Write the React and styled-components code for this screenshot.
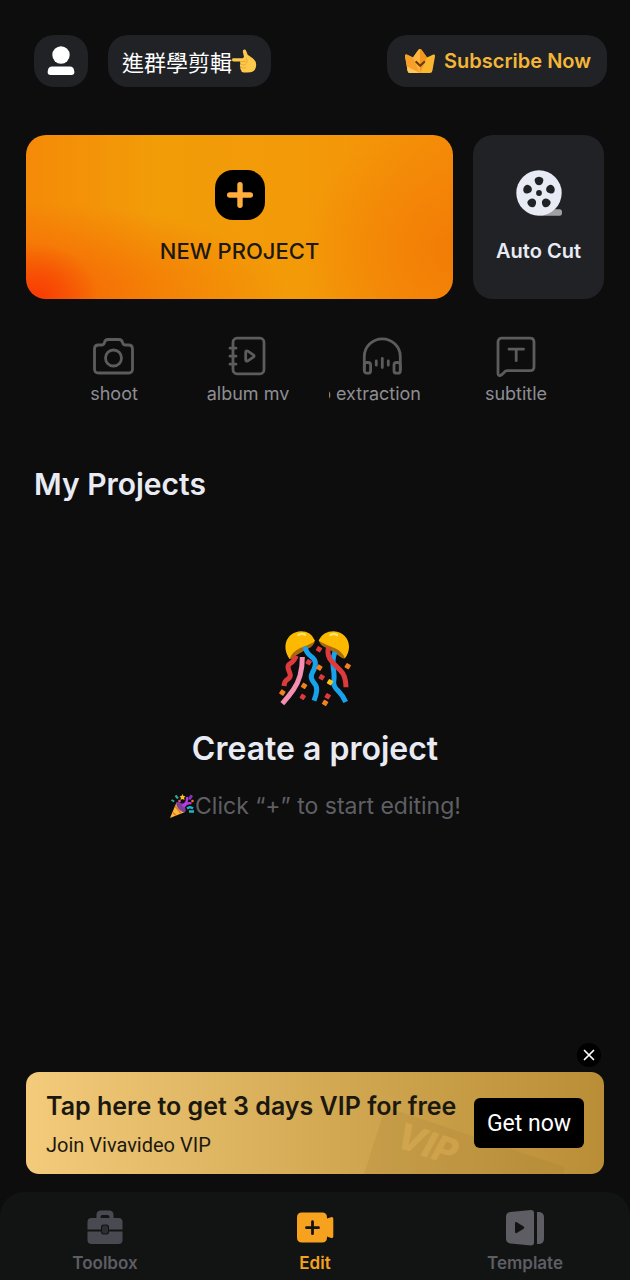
import React, { useState } from "react";
import styled, { createGlobalStyle } from "styled-components";

const shortcuts = [
  { id: "shoot", label: "shoot", icon: <CameraIcon /> },
  { id: "album", label: "album mv", icon: <AlbumIcon /> },
  { id: "audio", label: "audio extraction", icon: <HeadphonesIcon />, scrolled: true },
  { id: "subtitle", label: "subtitle", icon: <SubtitleIcon /> },
];

const tabs = [
  { id: "toolbox", label: "Toolbox", icon: <ToolboxIcon /> },
  { id: "edit", label: "Edit", icon: <EditIcon /> },
  { id: "template", label: "Template", icon: <TemplateIcon /> },
];

export default function App() {
  const [activeTab, setActiveTab] = useState("edit");
  const [showBanner, setShowBanner] = useState(true);

  return (
    <Page>
      <GlobalStyle />
      <Header>
        <ProfileButton aria-label="Profile">
          <ProfileIcon />
        </ProfileButton>
        <GroupButton>
          進群學剪輯
          <HandIcon />
        </GroupButton>
        <SubscribeButton>
          <CrownIcon />
          Subscribe Now
        </SubscribeButton>
      </Header>

      <Content>
        <Actions>
          <NewProjectCard>
            <PlusIcon />
            <NewProjectLabel>NEW PROJECT</NewProjectLabel>
          </NewProjectCard>
          <AutoCutCard>
            <ReelIcon />
            <AutoCutLabel>Auto Cut</AutoCutLabel>
          </AutoCutCard>
        </Actions>

        <Shortcuts>
          {shortcuts.map((item) => (
            <Shortcut key={item.id}>
              {item.icon}
              <ShortcutLabel $scrolled={item.scrolled}>
                <span>{item.label}</span>
              </ShortcutLabel>
            </Shortcut>
          ))}
        </Shortcuts>

        <SectionTitle>My Projects</SectionTitle>

        <EmptyState>
          <ConfettiIcon />
          <EmptyTitle>Create a project</EmptyTitle>
          <EmptyHint>
            <PartyIcon />
            Click “+” to start editing!
          </EmptyHint>
        </EmptyState>

        {showBanner && (
          <Promo>
            <CloseButton aria-label="Close" onClick={() => setShowBanner(false)}>
              <CloseIcon />
            </CloseButton>
            <Banner>
              <Watermark />
              <BannerText>
                <BannerTitle>Tap here to get 3 days VIP for free</BannerTitle>
                <BannerSubtitle>Join Vivavideo VIP</BannerSubtitle>
              </BannerText>
              <GetButton>Get now</GetButton>
            </Banner>
          </Promo>
        )}
      </Content>

      <TabBar>
        {tabs.map((tab) => (
          <Tab
            key={tab.id}
            $active={tab.id === activeTab}
            onClick={() => setActiveTab(tab.id)}
          >
            {tab.icon}
            {tab.label}
          </Tab>
        ))}
      </TabBar>
    </Page>
  );
}

/* ---------- icons ---------- */

function ProfileIcon() {
  return (
    <svg width="28" height="30" viewBox="0 0 28 30" fill="#fff">
      <circle cx="14" cy="9" r="8.7" />
      <path d="M5 20.500h18q3.500 0 4 3.500l.4 2q0 3-3 3H3.600q-3 0-3-3l.4-2q.5-3.500 4-3.500z" />
    </svg>
  );
}

function HandIcon() {
  return (
    <svg width="25" height="24" viewBox="0 0 25 24">
      <path
        d="M1.500 9.300h9.200L12 8 10.800 2.500q0-2.300 2-2 1 .2 1.500 1.700l1.400 3.500 5 3.500q3.500 2.500 3.500 6.800 0 4.500-3.300 6.500-2 1-6.500.9h-3q-2.400 0-2.300-2.300-1.300-1.200-.6-3-1.200-1.400-.1-3.200-.5-1 0-2.300l-6.900-.2Q0 12.200 0 10.700q0-1.400 1.500-1.400z"
        fill="#fcc94b"
      />
      <path
        d="M8.500 12.500h4.700M8.500 15.200q.6 1 5 .7M9.200 18.400q1 .8 4.300.5M14.500 9.500q2 3-.5 5"
        stroke="#eda93a"
        strokeWidth="1"
        fill="none"
        strokeLinecap="round"
      />
    </svg>
  );
}

function CrownIcon() {
  return (
    <svg width="30" height="24" viewBox="0 0 30 24">
      <path d="M1.700 5.500 8 8.500l5.500-7.700q1.500-1.600 3 0L22 8.500l6.300-3q1.900-.4 1.700 1.800l-2.600 14.500q-.4 2.200-2.600 2.200H5.200q-2.200 0-2.600-2.200L0 7.300Q-.2 5.100 1.700 5.500z" fill="#fbb62f" />
      <path d="M1.700 5.500 8 8.500 15 19v5H5.200q-2.200 0-2.600-2.200L0 7.300Q-.2 5.100 1.700 5.500z" fill="#f7a02a" />
      <path d="M2 17.500 15 24H5.200q-2.200 0-2.600-2.200z" fill="#ffc65c" />
      <path d="m8 8.500 5.500-7.700Q14 .2 15 .2V24z" fill="#ffb540" />
      <path d="M15 .2q1 0 1.500.6L22 8.500 15 24z" fill="#f2951b" />
      <path d="m11.300 13 3.900 3.800 4-3.800" stroke="#6b3c08" strokeWidth="2.200" fill="none" strokeLinecap="round" strokeLinejoin="round" />
    </svg>
  );
}

function PlusIcon() {
  return (
    <svg width="50" height="50" viewBox="0 0 50 50">
      <rect width="50" height="50" rx="18" fill="#000" />
      <path d="M25 14.700v20.600M14.700 25h20.600" stroke="#ffad3d" strokeWidth="5.400" strokeLinecap="round" />
    </svg>
  );
}

function ReelIcon() {
  return (
    <svg width="46" height="46" viewBox="0 0 46 46">
      <path d="M24 45.700h19.500q2.500 0 2.500-2.700v-1q0-2.700-2.500-2.700H34z" fill="#9fa0a3" />
      <circle cx="23" cy="23" r="22.700" fill="#e9ebf4" />
      <circle cx="23" cy="23" r="2.900" fill="#202226" />
      {[0, 72, 144, 216, 288].map((angle) => (
        <path
          key={angle}
          d="M23 6.700q2.300 0 3.700 1.500 1.300 1.600.3 3.900-1.200 3.200-4 3.200t-4-3.200q-1-2.300.3-3.900Q20.700 6.700 23 6.700z"
          fill="#202226"
          transform={`rotate(${angle} 23 23)`}
        />
      ))}
    </svg>
  );
}

function CameraIcon() {
  return (
    <ShortcutSvg viewBox="0 0 42 42">
      <path d="M5.500 9h3q2.500 0 3-2.500.7-3 3.500-3h11q2.800 0 3.500 3Q30 9 32.500 9h3q4 0 4 4v20q0 4-4 4h-30q-4 0-4-4V13q0-4 4-4z" />
      <circle cx="20.500" cy="22" r="8" />
    </ShortcutSvg>
  );
}

function AlbumIcon() {
  return (
    <ShortcutSvg viewBox="0 0 42 42">
      <rect x="6" y="2.200" width="31" height="35.600" rx="4" />
      <path d="M3 12.200h6M3 20.200h6M3 28.200h6" />
      <path d="M18.700 16.500q0-2.500 2.200-1.300l5.400 3.600q1.700 1.200 0 2.400l-5.400 3.600q-2.200 1.200-2.200-1.300z" />
    </ShortcutSvg>
  );
}

function HeadphonesIcon() {
  return (
    <ShortcutSvg viewBox="0 0 42 42">
      <path d="M3.300 34V20.500a18 17.700 0 0 1 36 0V34" />
      <rect x="3.300" y="26.500" width="6.300" height="10.700" rx="2.500" />
      <rect x="33" y="26.500" width="6.300" height="10.700" rx="2.500" />
      <path d="M15.300 25v4.200M21.300 22.500v9M27.300 25v4.200" />
    </ShortcutSvg>
  );
}

function SubtitleIcon() {
  return (
    <ShortcutSvg viewBox="0 0 42 42">
      <path d="M7 2.200h28q4 0 4 4v24.500q0 4-4 4H12.500q-2 0-3.500 1.800l-2 2q-3.500 2.500-4-.8V6.200q0-4 4-4z" />
      <path d="M14 13.200h14.500M21.200 13.200v11.500" />
    </ShortcutSvg>
  );
}

/* Two streamer balls with falling confetti */
function ConfettiIcon() {
  const dots = [
    [174, 102, "#dc3a3c"],
    [143, 141, "#dc3a3c"],
    [175, 157, "#f4801c"],
    [182, 186, "#dc3a3c"],
    [207, 201, "#fcc21b"],
    [129, 212, "#f4801c"],
    [125, 245, "#dc3a3c"],
    [200, 243, "#dc3a3c"],
    [192, 263, "#f4801c"],
    [64, 232, "#f4801c"],
    [260, 153, "#f4801c"],
  ];
  return (
    <svg width="76" height="78" viewBox="48 42 228 234">
      <path d="M86 132C60 96 76 51 120 49q30 0 42 28-8 14-26 22-18 8-28 18-14 14-22 15z" fill="#fcb900" />
      <path d="M86 132q8-22 30-32 24-9 45-20-4 14-22 22l-32 18q-12 12-21 12z" fill="#a8690f" />
      <path d="M252 130c26-36 8-78-34-81q-32 0-45 27 6 13 24 20 20 8 31 20 14 14 24 14z" fill="#fcb900" />
      <path d="M252 130q-8-20-30-30-22-8-48-22 4 14 24 22l30 18q14 12 24 12z" fill="#a8690f" />
      <path d="M112 60q10-6 20-1M208 60q11-6 20 0" stroke="#ffe36a" strokeWidth="7" fill="none" strokeLinecap="round" />
      <g fill="none" strokeWidth="15">
        <path d="M106 122q-8 18-18 23-11 6-5 20 4 9 5 16-1 9-10 13-8 5-9 19" stroke="#dc3a3c" />
        <path d="M124 126q0 61-27 98-14 20-33 42" stroke="#f48fb1" />
        <path d="M132 95q3 18 18 29 15 10 13 25-2 13-9 24-8 15 4 29 11 12 9 25-1 13-8 30" stroke="#17a3ec" />
        <path d="M222 111q-9 23-5 49 4 25 1 41-1 14 14 27 14 14 22 33" stroke="#17a3ec" />
        <path d="M202 98q-5 25 11 42 12 14 25 26 17 16 17 51" stroke="#dc3a3c" />
      </g>
      {dots.map(([x, y, color]) => (
        <rect key={`${x}-${y}`} x={x - 7} y={y - 7} width="15" height="15" rx="2" fill={color} transform={`rotate(32 ${x} ${y})`} />
      ))}
    </svg>
  );
}

function PartyIcon() {
  return (
    <svg width="26" height="26" viewBox="0 0 26 26">
      <path d="M1 25 7.500 9.500q6 3 8.500 9.500z" fill="#fcb93f" />
      <path d="m3.500 19 3.500 3.500M6 13l6 7.500" stroke="#e57825" strokeWidth="1.400" />
      <ellipse cx="12" cy="14" rx="3" ry="6.300" transform="rotate(-42 12 14)" fill="#7a3f9c" />
      <path d="M13 12q6-1 5-8M14.500 14q4-5 8-3.500" stroke="#b43be0" strokeWidth="2.400" fill="none" />
      <path d="m19 6 2.500-4.500L24 3l-2.500 4z" fill="#8b2fc9" />
      <path d="M6.500 2.500 9 5.500M2.500 7l2.700 1.500" stroke="#24b59d" strokeWidth="2" />
      <path d="m13.500 1 1 2 2 .3-1.400 1.500.4 2.200-2-1-2 1 .4-2.200L10.500 3.300l2-.3z" fill="#fcc21b" />
      <path d="M18 15.500q3-2.500 6 0M20 18.500h5" stroke="#1cb7c4" strokeWidth="2.300" fill="none" />
      <circle cx="10.500" cy="8" r="1.300" fill="#ec4899" />
      <circle cx="23.500" cy="8" r="1.300" fill="#f97316" />
    </svg>
  );
}

function CloseIcon() {
  return (
    <svg width="12" height="12" viewBox="0 0 12 12">
      <path d="m1.500 1.500 9 9M10.500 1.500l-9 9" stroke="#fff" strokeWidth="1.700" strokeLinecap="round" />
    </svg>
  );
}

function Watermark() {
  return (
    <WatermarkSvg viewBox="0 0 200 72" aria-hidden="true">
      <path d="M0 72 20 10q2-5 8-3l172 58v7z" fill="#8f6c2b" opacity="0.130" />
      <text
        x="30"
        y="44"
        transform="rotate(19 30 44)"
        fill="#e8b95c"
        opacity="0.350"
        fontFamily="Inter, sans-serif"
        fontSize="36"
        fontWeight="800"
        fontStyle="italic"
      >
        VIP
      </text>
    </WatermarkSvg>
  );
}

function ToolboxIcon() {
  return (
    <svg width="38" height="38" viewBox="0 0 38 38" fill="#494a51">
      <path fillRule="evenodd" d="M10.500 9.500V6q0-4.500 4.500-4.500h8q4.500 0 4.500 4.500v3.500zM14.500 9.500h9V8q0-2-2-2h-5q-2 0-2 2z" />
      <path d="M5.500 9h27q4 0 4 4v7.500h-14h-7h-14V13q0-4 4-4z" />
      <path d="M1.500 22.500h14h7h14V31q0 4-4 4h-27q-4 0-4-4z" />
      <rect x="15" y="15.500" width="8" height="10" rx="2.500" fill="#121414" />
      <rect x="16" y="16.500" width="6" height="8" rx="2" fill="#2c2e31" />
    </svg>
  );
}

function EditIcon() {
  return (
    <svg width="38" height="38" viewBox="0 0 38 38">
      <path
        d="M6 3.500h20q5 0 5 5v1l4-1.300q2.300-.5 2.300 1.500v17.700q0 2-2.300 1.500L31 27.500v1q0 5-5 5H6q-5 0-5-5v-20q0-5 5-5z"
        fill="currentColor"
      />
      <path d="M16.500 12.700v12M10.500 18.700h12" stroke="#121414" strokeWidth="2.800" strokeLinecap="round" />
    </svg>
  );
}

function TemplateIcon() {
  return (
    <svg width="38" height="38" viewBox="0 0 38 38" fill="currentColor">
      <path fillRule="evenodd" d="M4.500 3 25 1q3 0 3 3v29.500q0 3-3 3L4.500 34.500Q0 34 0 29.500V8q0-4.500 4.500-5zM9 14.500v8.300q0 2 1.800 1.200l6.800-4.200q1.300-1.100 0-2.200l-6.800-4.300q-1.800-.8-1.800 1.200z" />
      <path d="M31 3h1.500Q38 3 38 8.500v21q0 5.500-5.500 5.500H31z" />
    </svg>
  );
}

/* ---------- styles ---------- */

const GlobalStyle = createGlobalStyle`
  * {
    box-sizing: border-box;
  }
  body {
    margin: 0;
    background: #0d0d0d;
  }
  button {
    border: none;
    padding: 0;
    margin: 0;
    background: none;
    color: inherit;
    font: inherit;
    cursor: pointer;
  }
  svg {
    display: block;
    flex-shrink: 0;
  }
`;

const Page = styled.div`
  min-height: 100vh;
  display: flex;
  flex-direction: column;
  background: #0d0d0d;
  color: #e9ebf4;
  font-family: Inter, "Noto Sans CJK TC", sans-serif;
`;

const Header = styled.header`
  display: flex;
  align-items: center;
  gap: 20px;
  padding: 35px 23px 0 34px;
`;

const HeaderButton = styled.button`
  height: 52px;
  display: flex;
  align-items: center;
  justify-content: center;
  background: #202226;
  border-radius: 20px;
  white-space: nowrap;
`;

const ProfileButton = styled(HeaderButton)`
  width: 54px;
`;

const GroupButton = styled(HeaderButton)`
  padding: 0 14px;
  color: #fff;
  font-size: 22px;
`;

const SubscribeButton = styled(HeaderButton)`
  margin-left: auto;
  gap: 9px;
  padding: 0 16px 0 18px;
  color: #f5b638;
  font-size: 20px;
  font-weight: 600;
`;

const Content = styled.main`
  flex: 1;
  display: flex;
  flex-direction: column;
  padding: 48px 26px 18px;
`;

const Actions = styled.div`
  display: grid;
  grid-template-columns: 1fr 131px;
  gap: 20px;
`;

const ActionCard = styled.button`
  height: 164px;
  display: flex;
  flex-direction: column;
  align-items: center;
  padding-top: 35px;
  border-radius: 20px;
`;

const NewProjectCard = styled(ActionCard)`
  gap: 17px;
  color: #1b1810;
  background:
    radial-gradient(ellipse 64px 56px at 2% 100%, #f83a04, rgba(248, 70, 4, 0)),
    radial-gradient(ellipse 260px 90px at 0% 96%, rgba(246, 96, 4, 0.900), rgba(244, 112, 4, 0)),
    radial-gradient(ellipse 150px 130px at 100% 70%, rgba(242, 122, 6, 0.900), rgba(242, 126, 6, 0)),
    linear-gradient(90deg, #f58a08, #f29c08 30%, #f39a08 65%, #f58d08);
`;

const AutoCutCard = styled(ActionCard)`
  gap: 21px;
  background: #202226;
`;

const NewProjectLabel = styled.span`
  font-size: 22px;
  line-height: 28px;
  font-weight: 500;
`;

const AutoCutLabel = styled.span`
  font-size: 20px;
  line-height: 28px;
  font-weight: 600;
`;

const Shortcuts = styled.div`
  display: grid;
  grid-template-columns: repeat(4, 1fr);
  padding: 37px 21px 0;
`;

const Shortcut = styled.button`
  display: flex;
  flex-direction: column;
  align-items: center;
  gap: 4px;
`;

const ShortcutSvg = styled.svg`
  width: 42px;
  height: 42px;
  fill: none;
  stroke: #5c5c5e;
  stroke-width: 2.800;
  stroke-linecap: round;
  stroke-linejoin: round;
`;

/* A long label rests at the end of its marquee, with its start out of view */
const ShortcutLabel = styled.span`
  width: 106px;
  display: flex;
  justify-content: ${(props) => (props.$scrolled ? "flex-end" : "center")};
  padding-right: ${(props) => (props.$scrolled ? "14px" : "0")};
  overflow: hidden;
  white-space: nowrap;
  color: #8e8e93;
  font-size: 18px;
  line-height: 24px;
`;

const SectionTitle = styled.h2`
  margin: 0;
  padding: 58px 8px 0;
  font-size: 30px;
  line-height: 40px;
  font-weight: 600;
`;

const EmptyState = styled.section`
  flex: 1;
  display: flex;
  flex-direction: column;
  align-items: center;
  padding: 125px 0 40px;
`;

const EmptyTitle = styled.h3`
  margin: 22px 0 0;
  font-size: 32px;
  line-height: 40px;
  font-weight: 600;
`;

const EmptyHint = styled.p`
  display: flex;
  align-items: center;
  margin: 20px 0 0;
  color: #5f5f63;
  font-size: 23px;
  line-height: 34px;
`;

const Promo = styled.aside`
  display: flex;
  flex-direction: column;
  gap: 5px;
`;

const CloseButton = styled.button`
  width: 24px;
  height: 24px;
  margin-right: 3px;
  display: flex;
  align-items: center;
  justify-content: center;
  align-self: flex-end;
  border-radius: 50%;
  background: #000;
`;

const Banner = styled.div`
  position: relative;
  display: flex;
  align-items: center;
  justify-content: space-between;
  padding: 16px 20px;
  border-radius: 13px;
  overflow: hidden;
  color: #1b1810;
  background: linear-gradient(90deg, #f3cb7b, #d1a751 55%, #b98e36);
`;

/* Sits behind the banner text */
const WatermarkSvg = styled.svg`
  position: absolute;
  right: 40px;
  bottom: 0;
  width: 200px;
  height: 72px;
`;

const BannerText = styled.div`
  position: relative;
  display: flex;
  flex-direction: column;
  gap: 8px;
`;

const BannerTitle = styled.strong`
  font-size: 25px;
  line-height: 36px;
  font-weight: 600;
  white-space: nowrap;
`;

const BannerSubtitle = styled.span`
  font-family: Roboto, sans-serif;
  font-size: 20px;
  line-height: 26px;
`;

const GetButton = styled.button`
  position: relative;
  width: 110px;
  height: 50px;
  flex-shrink: 0;
  border-radius: 6px;
  background: #000;
  color: #fff;
  font-family: Roboto, sans-serif;
  font-size: 23px;
`;

const TabBar = styled.nav`
  display: grid;
  grid-template-columns: repeat(3, 1fr);
  padding: 17px 0 6px;
  border-radius: 24px 24px 0 0;
  background: #121414;
`;

const Tab = styled.button`
  display: flex;
  flex-direction: column;
  align-items: center;
  gap: 5px;
  color: ${(props) => (props.$active ? "#f6a21e" : "#5d5d63")};
  font-size: 17px;
  line-height: 22px;
  font-weight: 600;
`;
